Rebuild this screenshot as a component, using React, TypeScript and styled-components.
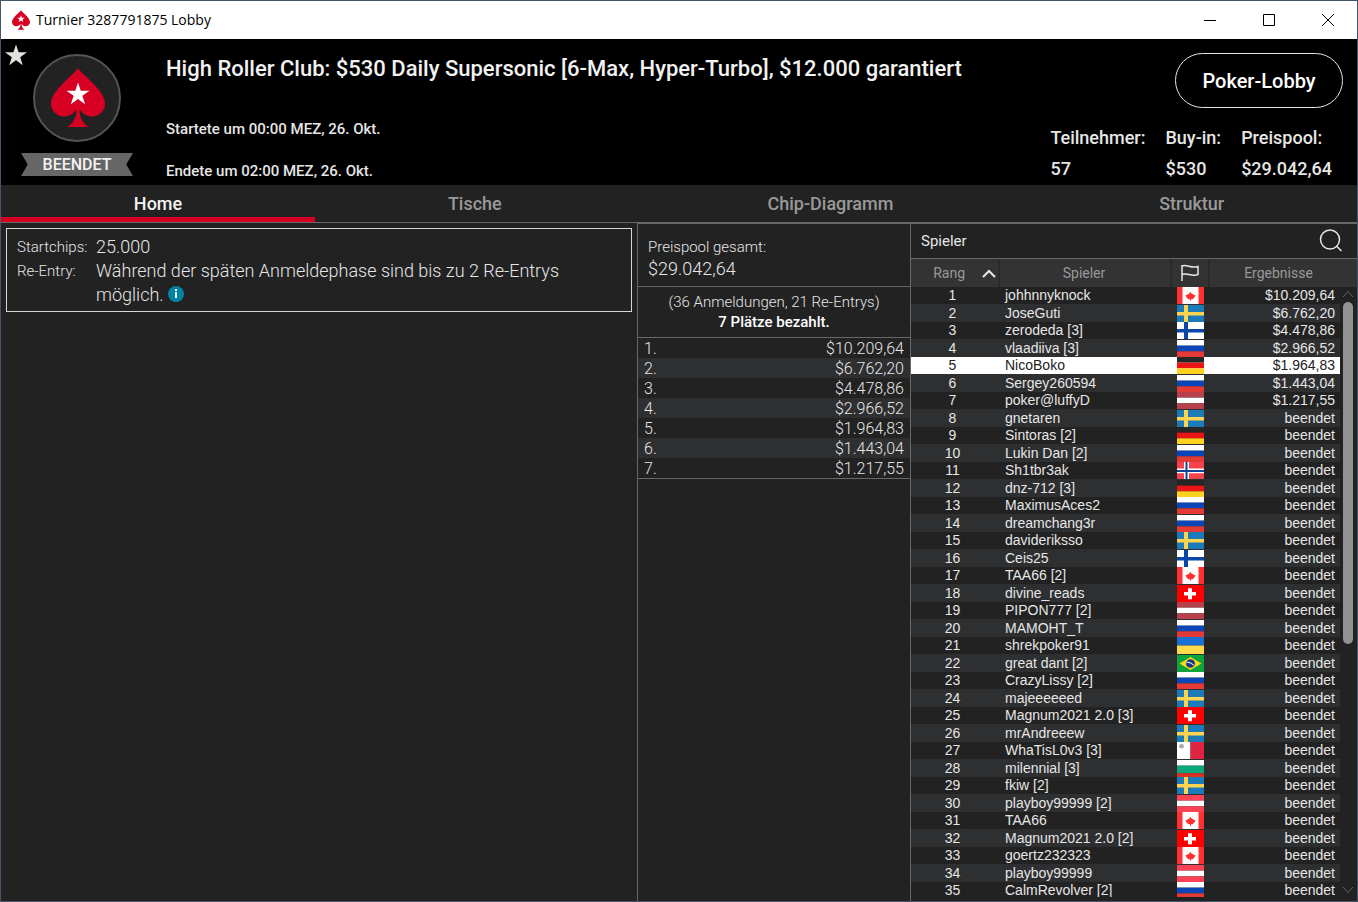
import React, { useState } from 'react';
import styled, { createGlobalStyle, css } from 'styled-components';

const GlobalStyle = createGlobalStyle`
  *, *::before, *::after { box-sizing: border-box; }
  body { margin: 0; background: #222; font-family: Roboto, "Liberation Sans", sans-serif; }
  button { font: inherit; color: inherit; background: none; border: 0; padding: 0; cursor: pointer; }
  h1, h2, p, dl, dd, ol { margin: 0; padding: 0; }
  svg { display: block; }
`;

const line = '#686868';
const red = '#d70022';
const stripe = '#2e2f31';

const Window = styled.div`
  display: flex;
  flex-direction: column;
  height: 100vh;
  border: 1px solid #45566a;
  background: #222;
  color: #e6e6e6;
`;

const TitleBar = styled.div`
  display: flex;
  align-items: center;
  flex: none;
  height: 38px;
  padding-left: 11px;
  background: #fff;
  color: #000;
`;

const WindowTitle = styled.span`
  flex: 1;
  margin-left: 6px;
  font: 14px/18px "Open Sans", "Noto Sans", sans-serif;
`;

const WindowButton = styled.button`
  display: grid;
  place-items: center;
  width: 59px;
  height: 38px;
`;

const Header = styled.header`
  display: flex;
  flex: none;
  height: 146px;
  background: #000;
`;

const Badge = styled.div`
  position: relative;
  display: flex;
  flex-direction: column;
  align-items: center;
  width: 152px;
  padding-top: 15px;
`;

const Favourite = styled.button`
  position: absolute;
  top: 5px;
  left: 4px;
`;

const Ribbon = styled.span`
  width: 112px;
  margin-top: 11px;
  background: #666;
  clip-path: polygon(0 0, 100% 0, 94% 50%, 100% 100%, 0 100%, 6% 50%);
  color: #f2f2f2;
  font-size: 16px;
  font-weight: 500;
  line-height: 23px;
  text-align: center;
`;

const Info = styled.div`
  flex: 1;
  padding: 16px 0 0 13px;
`;

const EventName = styled.h1`
  margin-bottom: 36px;
  font-size: 22px;
  font-weight: 500;
  line-height: 28px;
  color: #f2f2f2;
`;

const EventTime = styled.p`
  margin-bottom: 22px;
  font-size: 15px;
  font-weight: 500;
  line-height: 20px;
`;

const Summary = styled.div`
  display: flex;
  flex-direction: column;
  align-items: flex-end;
  padding: 14px 14px 0 0;
`;

const LobbyButton = styled.button`
  width: 168px;
  height: 55px;
  border: 1px solid #e6e6e6;
  border-radius: 28px;
  color: #fff;
  font-size: 20px;
  font-weight: 500;
`;

const Stats = styled.dl`
  display: flex;
  gap: 20px;
  margin-top: 14px;
  padding-right: 11px;
  font-size: 18px;
  font-weight: 500;
  line-height: 31px;
`;

const Tabs = styled.nav`
  display: flex;
  flex: none;
  height: 38px;
  border-bottom: 1px solid ${line};
`;

const Tab = styled.button<{ $active: boolean }>`
  flex: 1 1 auto;
  height: 37px;
  padding-top: 6px;
  border-bottom: 5px solid ${p => (p.$active ? red : 'transparent')};
  color: ${p => (p.$active ? '#f2f2f2' : '#999')};
  font-size: 18px;
  font-weight: 500;
  line-height: 24px;
`;

const Body = styled.main`
  display: grid;
  grid-template-columns: minmax(0, 636fr) minmax(0, 273fr) minmax(0, 447fr);
  flex: 1;
  min-height: 0;
`;

const Home = styled.section`
  padding: 5px;
`;

const Details = styled.dl`
  display: grid;
  grid-template-columns: 79px 1fr;
  padding: 6px 60px 4px 10px;
  border: 1px solid #d8d8d8;
  line-height: 24px;
  font-weight: 300;
`;

const DetailName = styled.dt`
  font-size: 15px;
`;

const DetailValue = styled.dd`
  font-size: 18px;
`;

const InfoButton = styled.button`
  display: inline-block;
  margin-left: 4px;
  vertical-align: -1px;
`;

const Prizes = styled.section`
  border-top: 1px solid ${line};
  border-left: 1px solid ${line};
  font-weight: 300;
`;

const PrizeTotal = styled.div`
  padding: 12px 10px 6px;
  border-bottom: 1px solid ${line};
  font-size: 15px;
  line-height: 22px;
`;

const Amount = styled.div`
  font-size: 18px;
`;

const Entries = styled.div`
  padding: 5px 0;
  border-bottom: 1px solid ${line};
  font-size: 15px;
  line-height: 20px;
  text-align: center;
`;

const Paid = styled.div`
  color: #fff;
  font-weight: 500;
`;

const PrizeTable = styled.table`
  width: 100%;
  border-collapse: collapse;
  border-bottom: 1px solid ${line};
  font-size: 16px;
  line-height: 18px;

  td { padding: 2px 6px 0; }
  td:last-child { text-align: right; }
  tr:nth-child(even) { background: ${stripe}; }
`;

const Players = styled.section`
  display: flex;
  flex-direction: column;
  min-height: 0;
  border-top: 1px solid ${line};
  border-left: 1px solid ${line};
`;

const PlayersHead = styled.div`
  display: flex;
  align-items: center;
  justify-content: space-between;
  flex: none;
  height: 35px;
  padding: 0 14px 0 10px;
  border-bottom: 1px solid ${line};
`;

const PlayersTitle = styled.h2`
  font-size: 15px;
  font-weight: 400;
`;

const ListFrame = styled.div`
  position: relative;
  flex: 1;
  min-height: 0;
  margin-bottom: 4px;
  overflow: hidden;
`;

const PlayerTable = styled.table`
  width: 100%;
  border-spacing: 0;
  table-layout: fixed;
  font: 14px/17px "Liberation Sans", Arial, sans-serif;
`;

const Col = styled.col<{ $width?: number }>`
  ${p => p.$width && css`width: ${p.$width}px;`}
`;

const HeadCell = styled.th<{ $last?: boolean }>`
  height: 28px;
  padding: 0 ${p => (p.$last ? 10 : 2)}px 0 0;
  border-right: ${p => (p.$last ? 0 : 2)}px solid #2a2a2a;
  background: #333;
  color: #999;
  font: 400 14px/28px Roboto, sans-serif;
`;

const SortButton = styled.button`
  display: flex;
  align-items: center;
  justify-content: flex-end;
  gap: 17px;
  width: 100%;
`;

const Cell = styled.td`
  height: 17px;
  padding: 0;
  white-space: nowrap;
`;

const RankCell = styled(Cell)`
  padding-right: 6px;
  text-align: center;
`;

const NameCell = styled(Cell)`
  padding-left: 5px;
`;

const FlagCell = styled(Cell)`
  line-height: 0;

  svg { width: 27px; height: 17px; margin-left: 5px; }
`;

const ResultCell = styled(Cell)`
  padding-right: 5px;
  text-align: right;
`;

const PlayerRow = styled.tr<{ $selected: boolean }>`
  color: ${p => (p.$selected ? '#222' : '#e6e6e6')};

  td:not(:last-child) { background: ${p => (p.$selected ? '#fff' : 'transparent')}; }
  &:nth-child(even) td { height: 18px; }
  &:nth-child(even) td:not(:last-child) { background: ${p => (p.$selected ? '#fff' : stripe)}; }
`;

const ScrollBar = styled.div`
  position: absolute;
  top: 28px;
  right: 1px;
  bottom: 0;
  display: flex;
  flex-direction: column;
  align-items: center;
  width: 16px;
  padding: 3px 0;
`;

const Track = styled.div`
  flex: 1;
  width: 10px;
  margin: 4px 0;
`;

const Thumb = styled.div`
  height: 59%;
  border-radius: 5px;
  background: #929292;
`;

const STAR = 'M50 0 62 36H100L69 58 81 95 50 72 19 95 31 58 0 36H38Z';

const Spade = ({ width, height }: { width: number; height: number }) => (
  <svg width={width} height={height} viewBox="0 0 54 59" aria-hidden="true">
    <path
      fill={red}
      d="M27 0C23 7 0 22 0 35.500C0 43 6 48.500 13 48.500C18 48.500 22 46 24.500 42.500H25.500C25.500 49 22 56 16 59H38C32 56 28.500 49 28.500 42.500H29.500C32 46 36 48.500 41 48.500C48 48.500 54 43 54 35.500C54 22 31 7 27 0Z"
    />
    <path fill="#fff" transform="translate(15.500 14.500) scale(.23)" d={STAR} />
  </svg>
);

type Country = 'ca' | 'se' | 'fi' | 'ru' | 'de' | 'lv' | 'no' | 'ch' | 'ua' | 'br' | 'mt' | 'bg' | 'at';

const bars = (a: string, b: string, c: string) => (
  <>
    <path fill={a} d="M0 0H27V6H0Z" />
    <path fill={b} d="M0 6H27V12H0Z" />
    <path fill={c} d="M0 12H27V18H0Z" />
  </>
);

const cross = (field: string, arm: string) => (
  <>
    <path fill={field} d="M0 0H27V18H0Z" />
    <path fill={arm} d="M7 0H11V18H7ZM0 7.500H27V11H0Z" />
  </>
);

const flags: Record<Country, React.ReactNode> = {
  ca: (
    <>
      <path fill="#fff" d="M0 0H27V18H0Z" />
      <path fill="#ff3131" d="M0 0H5.500V18H0ZM21.500 0H27V18H21.500Z" />
      <path fill="#ff3131" d="M13.500 5 15 7.500H16.500V8.500L18.500 8.500 17.500 11 15.500 13H14V14.500H13V13H11.500L9.500 11 8.500 8.500 10.500 8.500V7.500H12Z" />
    </>
  ),
  se: cross('#1b7ab8', '#ffd34f'),
  fi: cross('#fff', '#0a45a8'),
  ru: bars('#fff', '#0b46b8', '#e33a35'),
  de: bars('#262626', '#ec1515', '#ffd21f'),
  lv: bars('#b8404b', '#fff', '#b8404b'),
  at: bars('#fb4255', '#fff', '#fb4255'),
  bg: (
    <>
      <path fill="#fff" d="M0 0H27V6H0Z" />
      <path fill="#0aa57a" d="M0 6H27V14H0Z" />
      <path fill="#dc3020" d="M0 14H27V18H0Z" />
    </>
  ),
  no: (
    <>
      <path fill="#f4434b" d="M0 0H27V18H0Z" />
      <path fill="#fff" d="M7 0H12V18H7ZM0 7H27V12H0Z" />
      <path fill="#0b4494" d="M8.500 0H10.500V18H8.500ZM0 8.500H27V10.500H0Z" />
    </>
  ),
  ch: (
    <>
      <path fill="#f00" d="M0 0H27V18H0Z" />
      <path fill="#fff" d="M11 3.500H15V7.500H19V11H15V15H11V11H7V7.500H11Z" />
    </>
  ),
  ua: (
    <>
      <path fill="#1a6fd4" d="M0 0H27V9H0Z" />
      <path fill="#ffd94c" d="M0 9H27V18H0Z" />
    </>
  ),
  br: (
    <>
      <path fill="#0ea43c" d="M0 0H27V18H0Z" />
      <path fill="#fbd918" d="M13.500 2 24.500 9 13.500 16 2.500 9Z" />
      <circle cx="13.500" cy="9" r="4.500" fill="#183a8c" />
      <path stroke="#fff" d="M9.500 7.500Q14 7.500 17 11" fill="none" />
    </>
  ),
  mt: (
    <>
      <path fill="#fff" d="M0 0H13.500V18H0Z" />
      <path fill="#de2440" d="M13.500 0H27V18H13.500Z" />
      <circle cx="4.500" cy="4.500" r="2.500" fill="#aaa" />
    </>
  ),
};

const Flag = ({ country }: { country: Country }) => (
  <svg viewBox="0 0 27 18" preserveAspectRatio="none" role="img" aria-label={country}>
    {flags[country]}
  </svg>
);

const prizes = ['$10.209,64', '$6.762,20', '$4.478,86', '$2.966,52', '$1.964,83', '$1.443,04', '$1.217,55'];

const players: [string, Country][] = [
  ['johhnnyknock', 'ca'],
  ['JoseGuti', 'se'],
  ['zerodeda [3]', 'fi'],
  ['vlaadiiva [3]', 'ru'],
  ['NicoBoko', 'de'],
  ['Sergey260594', 'ru'],
  ['poker@luffyD', 'lv'],
  ['gnetaren', 'se'],
  ['Sintoras [2]', 'de'],
  ['Lukin Dan [2]', 'ru'],
  ['Sh1tbr3ak', 'no'],
  ['dnz-712 [3]', 'de'],
  ['MaximusAces2', 'ru'],
  ['dreamchang3r', 'ru'],
  ['davideriksso', 'se'],
  ['Ceis25', 'fi'],
  ['TAA66 [2]', 'ca'],
  ['divine_reads', 'ch'],
  ['PIPON777 [2]', 'lv'],
  ['MAMOHT_T', 'ru'],
  ['shrekpoker91', 'ua'],
  ['great dant [2]', 'br'],
  ['CrazyLissy [2]', 'ru'],
  ['majeeeeeed', 'se'],
  ['Magnum2021 2.0 [3]', 'ch'],
  ['mrAndreeew', 'se'],
  ['WhaTisL0v3 [3]', 'mt'],
  ['milennial [3]', 'bg'],
  ['fkiw [2]', 'se'],
  ['playboy99999 [2]', 'at'],
  ['TAA66', 'ca'],
  ['Magnum2021 2.0 [2]', 'ch'],
  ['goertz232323', 'ca'],
  ['playboy99999', 'at'],
  ['CalmRevolver [2]', 'ru'],
];

const stats = [
  ['Teilnehmer:', '57'],
  ['Buy-in:', '$530'],
  ['Preispool:', '$29.042,64'],
];

const tabNames = ['Home', 'Tische', 'Chip-Diagramm', 'Struktur'];

export default function App() {
  const [tab, setTab] = useState('Home');
  const [selected, setSelected] = useState(4);

  return (
    <Window>
      <GlobalStyle />
      <TitleBar>
        <Spade width={18} height={20} />
        <WindowTitle>Turnier 3287791875 Lobby</WindowTitle>
        <WindowButton aria-label="Minimieren">
          <svg width="12" height="12"><path stroke="#000" d="M0 6.500H12" /></svg>
        </WindowButton>
        <WindowButton aria-label="Maximieren">
          <svg width="12" height="12"><path stroke="#000" fill="none" d="M.5 .5H11.500V11.500H.5Z" /></svg>
        </WindowButton>
        <WindowButton aria-label="Schließen">
          <svg width="12" height="12"><path stroke="#000" d="M0 0 12 12M12 0 0 12" /></svg>
        </WindowButton>
      </TitleBar>

      <Header>
        <Badge>
          <Favourite aria-label="Favorit">
            <svg width="22" height="22" viewBox="0 0 100 96"><path fill="#e0e0e0" d={STAR} /></svg>
          </Favourite>
          <svg width="88" height="88" viewBox="0 0 88 88" aria-hidden="true">
            <circle cx="44" cy="44" r="43" fill="#222" stroke="#555" strokeWidth="2" />
            <svg x="18" y="14"><Spade width={54} height={59} /></svg>
          </svg>
          <Ribbon>BEENDET</Ribbon>
        </Badge>
        <Info>
          <EventName>High Roller Club: $530 Daily Supersonic [6-Max, Hyper-Turbo], $12.000 garantiert</EventName>
          <EventTime>Startete um 00:00 MEZ, 26. Okt.</EventTime>
          <EventTime>Endete um 02:00 MEZ, 26. Okt.</EventTime>
        </Info>
        <Summary>
          <LobbyButton>Poker-Lobby</LobbyButton>
          <Stats>
            {stats.map(([name, value]) => (
              <div key={name}>
                <dt>{name}</dt>
                <dd>{value}</dd>
              </div>
            ))}
          </Stats>
        </Summary>
      </Header>

      <Tabs>
        {tabNames.map(name => (
          <Tab key={name} $active={name === tab} onClick={() => setTab(name)}>{name}</Tab>
        ))}
      </Tabs>

      <Body>
        <Home>
          <Details>
            <DetailName>Startchips:</DetailName>
            <DetailValue>25.000</DetailValue>
            <DetailName>Re-Entry:</DetailName>
            <DetailValue>
              Während der späten Anmeldephase sind bis zu 2 Re-Entrys möglich.
              <InfoButton aria-label="Info">
                <svg width="16" height="16">
                  <circle cx="8" cy="8" r="8" fill="#0083a5" />
                  <path fill="#fff" d="M7 3H9V5H7ZM7 6H9V12H7Z" />
                </svg>
              </InfoButton>
            </DetailValue>
          </Details>
        </Home>

        <Prizes>
          <PrizeTotal>
            Preispool gesamt:
            <Amount>$29.042,64</Amount>
          </PrizeTotal>
          <Entries>
            (36 Anmeldungen, 21 Re-Entrys)
            <Paid>7 Plätze bezahlt.</Paid>
          </Entries>
          <PrizeTable>
            <tbody>
              {prizes.map((prize, i) => (
                <tr key={prize}>
                  <td>{i + 1}.</td>
                  <td>{prize}</td>
                </tr>
              ))}
            </tbody>
          </PrizeTable>
        </Prizes>

        <Players>
          <PlayersHead>
            <PlayersTitle>Spieler</PlayersTitle>
            <button aria-label="Suchen">
              <svg width="24" height="24" fill="none" stroke="#e6e6e6" strokeWidth="1.500">
                <circle cx="11" cy="10.500" r="9.500" />
                <path d="M17.500 17 22.500 22" />
              </svg>
            </button>
          </PlayersHead>
          <ListFrame>
            <PlayerTable>
              <colgroup>
                <Col $width={89} />
                <Col />
                <Col $width={38} />
                <Col $width={130} />
                <Col $width={17} />
              </colgroup>
              <thead>
                <tr>
                  <HeadCell>
                    <SortButton>
                      Rang
                      <svg width="14" height="9" fill="none" stroke="#e6e6e6" strokeWidth="2"><path d="M1 8 7 2 13 8" /></svg>
                    </SortButton>
                  </HeadCell>
                  <HeadCell>Spieler</HeadCell>
                  <HeadCell aria-label="Land">
                    <svg width="32" height="18" fill="none" stroke="#e6e6e6" strokeWidth="1.500">
                      <path d="M10 1V17M10 2C15 0 19 5 26 2.500V10.500C19 13 15 8 10 10.500" />
                    </svg>
                  </HeadCell>
                  <HeadCell $last colSpan={2}>Ergebnisse</HeadCell>
                </tr>
              </thead>
              <tbody>
                {players.map(([name, country], i) => (
                  <PlayerRow key={name} $selected={i === selected} onClick={() => setSelected(i)}>
                    <RankCell>{i + 1}</RankCell>
                    <NameCell>{name}</NameCell>
                    <FlagCell><Flag country={country} /></FlagCell>
                    <ResultCell>{prizes[i] ?? 'beendet'}</ResultCell>
                    <Cell />
                  </PlayerRow>
                ))}
              </tbody>
            </PlayerTable>
            <ScrollBar>
              <svg width="12" height="8" fill="none" stroke="#666"><path d="M1 7 6 1.500 11 7" /></svg>
              <Track><Thumb /></Track>
              <svg width="12" height="8" fill="none" stroke="#666"><path d="M1 1 6 6.500 11 1" /></svg>
            </ScrollBar>
          </ListFrame>
        </Players>
      </Body>
    </Window>
  );
}
